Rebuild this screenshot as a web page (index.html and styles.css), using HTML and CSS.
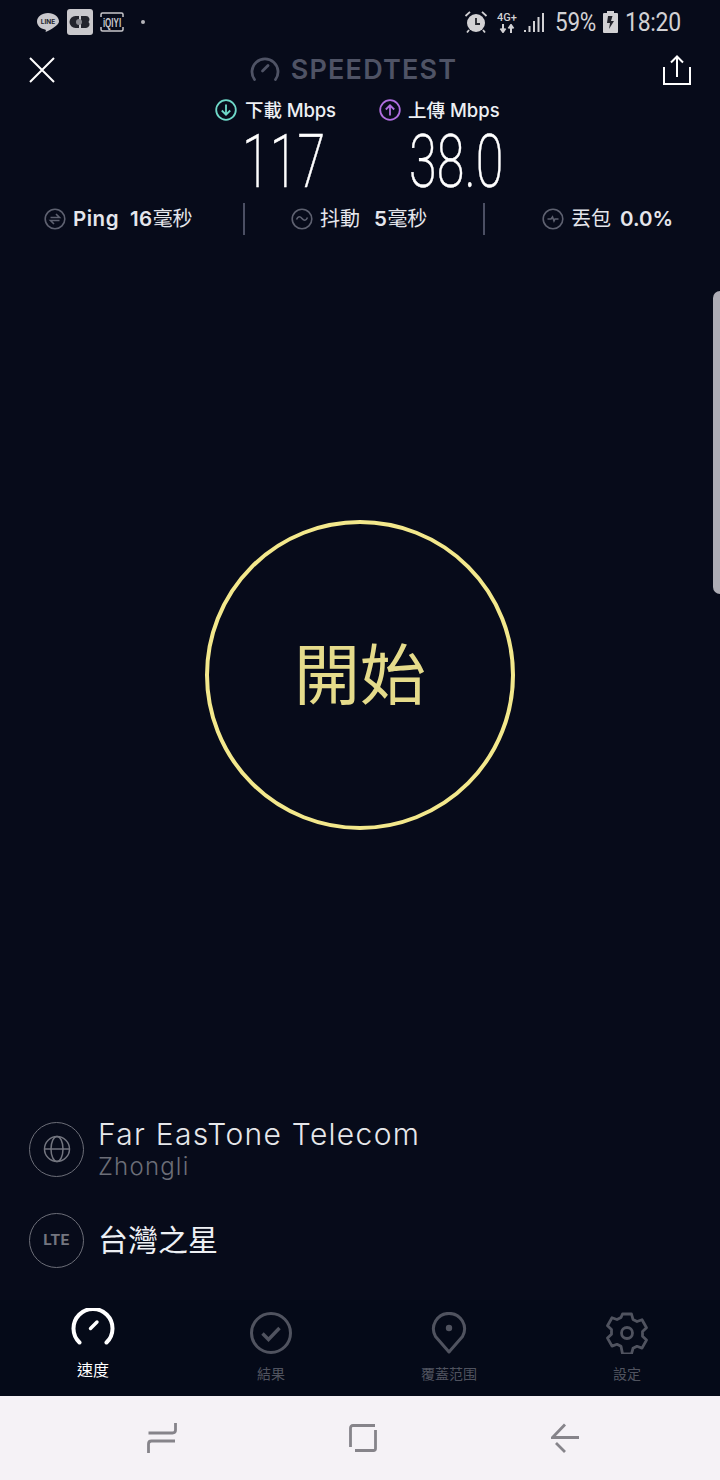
FILE: index.html
```html
<!DOCTYPE html>
<html lang="zh-Hant">
<head>
<meta charset="utf-8">
<title>Speedtest</title>
<link rel="stylesheet" href="styles.css">
</head>
<body>
<div class="app">
  <div class="status">
    <div class="status-left">
      <svg class="si" width="24" height="24" viewBox="0 0 24 24"><path d="M12 3C5.800 3 1 6.800 1 11.500c0 4 3.400 7.200 8 8 .8.200 1 .6.800 1.300l-.2 1.200c4-1.500 13.400-6.700 13.400-10.500C23 6.800 18.200 3 12 3z" fill="#c9c8cc"/><text x="12" y="14" class="line-t">LINE</text></svg>
      <svg class="si" width="26" height="26" viewBox="0 0 26 26"><rect width="26" height="26" rx="3" fill="#c9c8cc"/><path d="M12 7H8.500a6 6 0 0 0 0 12H12z M14 7h5a3.500 3.500 0 0 1 2.500 6 3.500 3.500 0 0 1-2.500 6h-5z" fill="#23242c"/><circle cx="12" cy="13" r="3" fill="#8a8a90"/></svg>
      <svg class="si iq" width="24" height="20" viewBox="0 0 24 20"><path d="M1 5V2.500Q1 1 2.500 1h19Q23 1 23 2.500V5M1 15v2.500Q1 19 2.500 19h19q1.500 0 1.500-1.500V15" fill="none" stroke="#c9c8cc" stroke-width="1.500"/><text transform="translate(12 15) scale(.8 1.3)" class="iq-t">iQIYI</text></svg>
      <span class="dot"></span>
    </div>
    <div class="status-right">
      <svg width="24" height="24" viewBox="0 0 24 24"><circle cx="12" cy="13" r="9" fill="#d2d1d4"/><path d="M12 8v6h4" fill="none" stroke="#23242c" stroke-width="1.800"/><path d="M1.500 6 6 1.800M22.500 6 18 1.800M5 20l-2 2.500M19 20l2 2.500" stroke="#d2d1d4" stroke-width="1.800"/></svg>
      <div class="net"><span>4G+</span><svg width="18" height="9" viewBox="0 0 18 9"><path d="M5 0v7M2.500 4.500 5 8l2.500-3.500M13 9V2M10.500 4.500 13 1l2.500 3.500" fill="none" stroke="#d2d1d4" stroke-width="2"/></svg></div>
      <svg class="sig" width="21" height="22" viewBox="0 0 21 22"><path d="M1 21v-2M5.500 21v-6M10 21V10M14.500 21V6M19 21V2" stroke="#d2d1d4" stroke-width="2" fill="none"/></svg>
      <span class="st-pct">59%</span>
      <svg class="batt" width="15" height="22" viewBox="0 0 15 22"><path d="M4 2V0h7v2h3a1 1 0 0 1 1 1v18a1 1 0 0 1-1 1H1a1 1 0 0 1-1-1V3a1 1 0 0 1 1-1z" fill="#d2d1d4"/><path d="M9.500 5H5L4 12h3l-1 6 5-8H8z" fill="#23242c"/></svg>
      <span class="st-time">18:20</span>
    </div>
  </div>

  <header class="head">
    <svg class="close" width="26" height="26" viewBox="0 0 26 26"><path d="M1 1l24 24M25 1 1 25" stroke="#fff" stroke-width="2" fill="none"/></svg>
    <div class="brand">
      <svg width="30" height="26" viewBox="0 0 30 26"><path d="M4.500 23.500A13 13 0 1 1 25.500 23.500" fill="none" stroke="#4f5365" stroke-width="2.800" stroke-linecap="round"/><path d="M12.500 15 18 9.500" stroke="#4f5365" stroke-width="2.800" stroke-linecap="round"/></svg>
      <span>SPEEDTEST</span>
    </div>
    <svg class="share" width="28" height="30" viewBox="0 0 28 30"><path d="M1 12v17h26V12M14 22V2M8 7.500 14 1.500l6 6" fill="none" stroke="#fff" stroke-width="2"/></svg>
  </header>

  <div class="rates">
    <div class="rate rate-dl">
      <div class="rate-label">
        <svg width="22" height="22" viewBox="0 0 22 22"><circle cx="11" cy="11" r="9.800" fill="none" stroke="#6fd9c9" stroke-width="1.800"/><path d="M11 5.500v10M6.800 11.500l4.200 4.200 4.200-4.200" fill="none" stroke="#6fd9c9" stroke-width="1.800"/></svg>
        <span>下載 Mbps</span>
      </div>
      <div class="rate-num"><span>117</span></div>
    </div>
    <div class="rate rate-ul">
      <div class="rate-label">
        <svg width="22" height="22" viewBox="0 0 22 22"><circle cx="11" cy="11" r="9.800" fill="none" stroke="#b06ee0" stroke-width="1.800"/><path d="M11 16.500v-10M6.800 10.500 11 6.300l4.200 4.200" fill="none" stroke="#b06ee0" stroke-width="1.800"/></svg>
        <span>上傳 Mbps</span>
      </div>
      <div class="rate-num"><span>38.0</span></div>
    </div>
  </div>

  <div class="stats">
    <div class="stat stat-1">
      <svg width="22" height="22" viewBox="0 0 22 22"><circle cx="11" cy="11" r="9.800" class="ic"/><path d="M6.500 9.500h9L12 6M15.500 12.500h-9L10 16" class="ic"/></svg>
      <b>Ping</b><b class="val">16<span class="unit">毫秒</span></b>
    </div>
    <div class="stat stat-2">
      <svg width="22" height="22" viewBox="0 0 22 22"><circle cx="11" cy="11" r="9.800" class="ic"/><path d="M5.500 11.500c1.500-3.500 3.500-3.500 5.500-1s4 2.500 5.500-1" class="ic"/></svg>
      <span class="name">抖動</span><b class="val">5<span class="unit">毫秒</span></b>
    </div>
    <div class="stat stat-3">
      <svg width="22" height="22" viewBox="0 0 22 22"><circle cx="11" cy="11" r="9.800" class="ic"/><path d="M5.500 11h3.500l1.500-2 1.500 4 1-2h3.500" class="ic"/></svg>
      <span class="name">丟包</span><b class="val">0.0%</b>
    </div>
  </div>

  <main class="stage">
    <div class="go">開始</div>
  </main>

  <section class="conn">
    <div class="row row-isp">
      <div class="badge">
        <svg width="28" height="28" viewBox="0 0 28 28"><circle cx="14" cy="14" r="12.500" fill="none" stroke="#73757f" stroke-width="1.500"/><ellipse cx="14" cy="14" rx="6" ry="12.500" fill="none" stroke="#73757f" stroke-width="1.500"/><path d="M1.500 14h25" stroke="#73757f" stroke-width="1.500"/></svg>
      </div>
      <div class="isp">
        <div class="isp-name">Far EasTone Telecom</div>
        <div class="isp-loc">Zhongli</div>
      </div>
    </div>
    <div class="row row-net">
      <div class="badge lte">LTE</div>
      <div class="carrier">台灣之星</div>
    </div>
  </section>

  <nav class="tabs">
    <div class="tab on">
      <svg width="44" height="38" viewBox="0 0 44 38"><path d="M8.500 34.500a19.500 19.500 0 1 1 27 0" fill="none" stroke="#fff" stroke-width="4" stroke-linecap="round"/><path d="M19.500 20.500 26 14" stroke="#fff" stroke-width="3.400" stroke-linecap="round"/></svg>
      <span>速度</span>
    </div>
    <div class="tab">
      <svg width="42" height="42" viewBox="0 0 42 42"><circle cx="21" cy="21" r="19.500" fill="none" stroke="#50535f" stroke-width="3"/><path d="M12.500 21.500l6 6 11-11.500" fill="none" stroke="#50535f" stroke-width="3.400"/></svg>
      <span>結果</span>
    </div>
    <div class="tab">
      <svg width="42" height="42" viewBox="0 0 42 42"><path d="M21 40 7.500 24.500A15.500 15.500 0 1 1 34.500 24.500z" fill="none" stroke="#50535f" stroke-width="3" stroke-linejoin="round"/><circle cx="21" cy="16" r="3.200" fill="#50535f"/></svg>
      <span>覆蓋范围</span>
    </div>
    <div class="tab">
      <svg width="44" height="42" viewBox="0 0 44 42"><path d="M17.500 2h9l1.500 5.500 4 2 5-1.800 4.500 8-4 3.800v4.800l4 3.800-4.500 8-5-1.800-4 2-1.500 5.500h-9L16 34.300l-4-2-5 1.800-4.500-8 4-3.800v-4.800l-4-3.800 4.500-8 5 1.800 4-2z" fill="none" stroke="#50535f" stroke-width="2.800" stroke-linejoin="round"/><circle cx="22" cy="21" r="5.500" fill="none" stroke="#50535f" stroke-width="2.800"/></svg>
      <span>設定</span>
    </div>
  </nav>

  <div class="sysnav">
    <svg width="30" height="32" viewBox="0 0 30 32"><path d="M1.500 31V22q0-3 3-3H28M28.500 1v7q0 3-3 3H1.500" fill="none" stroke="#86848a" stroke-width="2.800"/></svg>
    <svg class="home" width="28" height="28" viewBox="0 0 28 28"><path d="M1.500 23V4q0-2.500 2.500-2.500h22M26.500 6v18.500q0 2-2 2H6" fill="none" stroke="#86848a" stroke-width="2.800"/></svg>
    <svg width="28" height="30" viewBox="0 0 28 30"><path d="M14 1.500 1.500 14.500H28M5 20l9 9" fill="none" stroke="#86848a" stroke-width="2.800"/></svg>
  </div>

  <div class="handle"></div>
</div>
</body>
</html>
```
FILE: styles.css
```css
* { box-sizing: border-box; }
html, body { margin: 0; padding: 0; }
body { background: #070b1a; font-family: "Inter", "Noto Sans CJK TC", sans-serif; }
.app { position: relative; width: 720px; height: 1480px; overflow: hidden; background: #070b1a; color: #fff; display: flex; flex-direction: column; }

.status { height: 44px; display: flex; justify-content: space-between; align-items: center; padding: 0 40px 0 36px; flex: none; }
.status-left { display: flex; align-items: center; gap: 7px; }
.line-t { font: 700 6.500px "Inter", sans-serif; fill: #23242c; text-anchor: middle; }
.iq-t { font: 700 10px "Liberation Sans", sans-serif; fill: #c9c8cc; text-anchor: middle; }
.dot { width: 4px; height: 4px; border-radius: 50%; background: #b5b5ba; margin-left: 10px; }
.status-right { display: flex; align-items: center; color: #d2d1d4; }
.net { width: 24px; margin: 0 5px 0 7px; display: flex; flex-direction: column; align-items: center; font: 500 11px/12px "Roboto", sans-serif; }
.sig { margin-right: 10px; }
.st-pct, .st-time { font: 400 25px/30px "Roboto", sans-serif; display: inline-block; letter-spacing: -.3px; margin-top: 2px; transform-origin: left center; }
.st-pct { width: 40px; transform: scaleX(.9); }
.batt { margin: 0 7px 0 8px; }
.st-time { width: 55px; transform: scaleX(.92); }

.head { height: 52px; flex: none; display: flex; align-items: center; justify-content: space-between; padding: 0 29px; position: relative; }
.brand { display: flex; align-items: center; gap: 11px; color: #4f5365; font: 600 27px/30px "Inter", sans-serif; letter-spacing: 1.200px; margin-right: 11px; }
.brand svg { margin-top: -3px; }

.rates { flex: none; display: flex; padding-left: 215px; height: 104px; }
.rate-dl { width: 164px; }
.rate-label { display: flex; align-items: center; gap: 8px; height: 26px; padding-top: 1px; font: 500 18.500px/26px "Inter", "Noto Sans CJK TC", sans-serif; color: #eef0f4; white-space: nowrap; letter-spacing: -.1px; }
.rate-ul .rate-label { gap: 7px; letter-spacing: 0; }
.rate-num { font: 200 74px/58px "Roboto", sans-serif; margin-top: 11px; -webkit-text-stroke: .5px #fff; }
.rate-num span { display: inline-block; transform: scaleX(.68); transform-origin: left center; }
.rate-dl .rate-num { padding-left: 27px; }
.rate-ul .rate-num { padding-left: 30px; }

.stats { flex: none; height: 38px; display: flex; align-items: center; }
.stat { height: 32px; display: flex; align-items: center; font: 600 20.500px/32px "Inter", "Noto Sans CJK TC", sans-serif; letter-spacing: .5px; color: #e5e6ec; white-space: nowrap; }
.stat svg { margin-right: 7px; flex: none; }
.stat b { font-weight: 600; }
.stat .val { margin-left: 11px; }
.stat .unit { font-weight: 400; font-size: 20px; letter-spacing: -.2px; }
.stat .name { font-weight: 400; font-size: 20px; letter-spacing: 0; }
.stat .ic { fill: none; stroke: #5e6170; stroke-width: 1.600; }
.stat-1 { width: 245px; padding-left: 44px; border-right: 2px solid #4b4f63; }
.stat-2 { width: 240px; padding-left: 46px; border-right: 2px solid #4b4f63; }
.stat-2 .val { margin-left: 14px; }
.stat-3 { padding-left: 57px; }
.stat-3 .val { margin-left: 9px; letter-spacing: 0; }

.stage { flex: 1; display: flex; align-items: center; justify-content: center; }
.go { width: 310px; height: 310px; border-radius: 50%; border: 4px solid #f3e88c; padding-bottom: 10px; color: #e5db8b; font: 400 66px/1 "Noto Sans CJK TC", sans-serif; display: flex; align-items: center; justify-content: center; }

.conn { flex: none; height: 188px; padding-left: 29px; display: flex; flex-direction: column; }
.row { display: flex; align-items: center; gap: 14px; }
.row-isp { height: 74px; }
.row-net { height: 55px; margin-top: 27px; }
.badge { width: 55px; height: 55px; border: 1.500px solid #6c6e78; border-radius: 50%; display: flex; align-items: center; justify-content: center; flex: none; }
.lte { font: 700 15.500px/1 "Roboto", sans-serif; color: #73757f; letter-spacing: .5px; }
.isp { padding-bottom: 2px; }
.isp-name { font: 300 30px/37px "Inter", sans-serif; color: #e6e7ea; white-space: nowrap; letter-spacing: 1.300px; }
.isp-loc { font: 300 24px/28px "Inter", sans-serif; color: #6c6e78; letter-spacing: 1.200px; }
.carrier { font: 400 30px/1 "Noto Sans CJK TC", sans-serif; color: #eef0f4; padding-bottom: 5px; }

.tabs { flex: none; height: 96px; background: #050a18; display: grid; grid-template-columns: repeat(4, 1fr); padding: 0 4px; }
.tab { display: flex; flex-direction: column; align-items: center; padding-top: 12px; font: 400 14px/20px "Noto Sans CJK TC", sans-serif; color: #50535f; }
.tab svg { display: block; }
.tab span { margin-top: 9px; }
.tab.on { padding-top: 8px; color: #fff; font-size: 16px; }
.tab.on span { margin-top: 13px; }

.sysnav { flex: none; height: 84px; background: #f5f2f6; display: flex; align-items: center; padding: 0 141px 0 147px; justify-content: space-between; }
.home { margin-right: 2px; }

.handle { position: absolute; right: 0; top: 291px; width: 7px; height: 303px; background: #aeadb5; border-radius: 7px 0 0 7px; }
```
